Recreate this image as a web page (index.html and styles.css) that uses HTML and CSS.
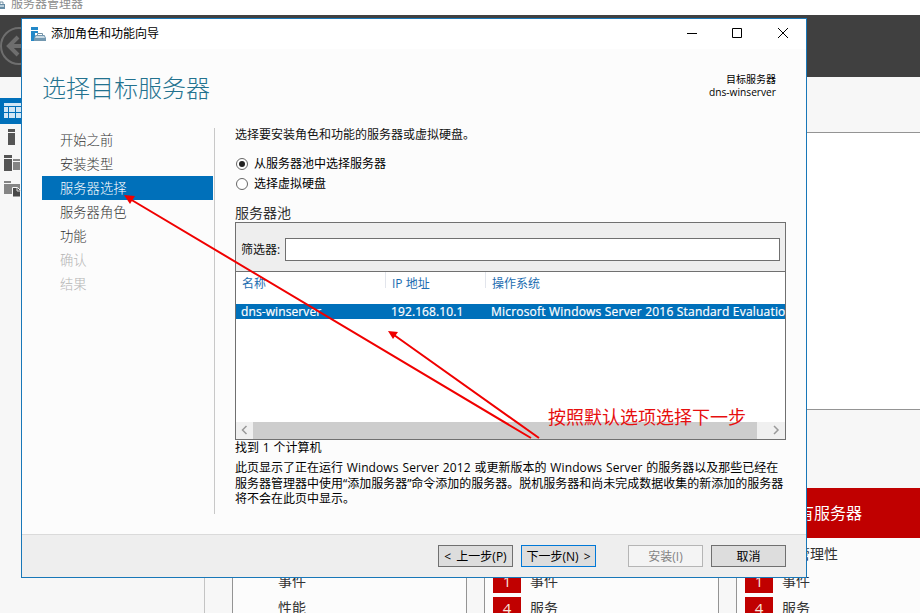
FILE: index.html
```html
<!DOCTYPE html>
<html lang="zh-CN">
<head>
	<meta charset="utf-8">
	<title>添加角色和功能向导</title>
	<link rel="stylesheet" href="styles.css">
</head>
<body>
	<!--服务器管理器-->
	<div class="manager">
		<div class="manager-title">
			<svg width="8" height="12" viewBox="0 0 8 12"><path d="M0 4V2h3v2" fill="none" stroke="#7592a5"/><path d="M0 4h5v5H0z" fill="#668ca5"/><path d="M0 5h4v2H0z" fill="#b9cdd9"/></svg>
			<span>服务器管理器</span>
		</div>
		<div class="manager-bar">
			<svg width="40" height="40" viewBox="0 0 40 40" fill="none" stroke="#6e6e6e"><circle cx="19" cy="20" r="18" stroke-width="2"/><path d="M32 20H9M18 11L9 20l9 9" stroke-width="4"/></svg>
		</div>
		<div class="manager-body">
			<div class="side">
				<p class="side-item active"><svg width="18" height="16" viewBox="0 0 18 16" fill="#d4e7f5"><path d="M0 0h18v3H0zM0 4h4v5H0zM5 4h6v5H5zM12 4h6v5h-6zM0 10h4v5H0zM5 10h6v5H5zM12 10h6v5h-6z"/></svg></p>
				<p class="side-item"><svg width="18" height="16" viewBox="0 0 18 16" fill="#555"><path d="M4 0h7v3H4zM4 4h7v12H4z"/></svg></p>
				<p class="side-item"><svg width="18" height="16" viewBox="0 0 18 16"><path d="M0 0h8v3H0zM0 4h8v12H0z" fill="#555"/><path d="M9 4h7v2H9zM9 7h7v8H9z" fill="#858585"/></svg></p>
				<p class="side-item"><svg width="18" height="16" viewBox="0 0 18 16"><path d="M0 0h7v2H0zM0 3h16v10H0z" fill="#858585"/><path d="M8.500 6.500h5l3 3V16h-8z" fill="#494949" stroke="#f7f7f7"/><path d="M13 7v3h3" fill="none" stroke="#ddd"/></svg></p>
			</div>
			<div class="main">
				<div class="main-top"></div>
				<div class="main-welcome"></div>
				<div class="main-gap"></div>
				<div class="tiles">
					<div class="tile">
						<div class="tile-head"></div>
						<ul>
							<li></li>
							<li><i></i>事件</li>
							<li><i></i>性能</li>
						</ul>
					</div>
					<div class="tile">
						<div class="tile-head"></div>
						<ul>
							<li></li>
							<li><i class="num">1</i>事件</li>
							<li><i class="num">4</i>服务</li>
						</ul>
					</div>
					<div class="tile">
						<div class="tile-head">所有服务器</div>
						<ul>
							<li><i></i>可管理性</li>
							<li><i class="num">1</i>事件</li>
							<li><i class="num">4</i>服务</li>
						</ul>
					</div>
				</div>
			</div>
		</div>
	</div>

	<!--向导窗口-->
	<div class="dialog">
		<div class="dialog-title">
			<svg width="15" height="15" viewBox="0 0 15 15"><path d="M0 0h7v3H0zM0 4h7v2H4v8H0z" fill="#2388c8"/><path d="M6.500 8V6.500h5V8" fill="none" stroke="#7592a5"/><path d="M3 11l1.500-3h9L15 11v3H3z" fill="#7398b0"/><path d="M5 9h8l1 2H4z" fill="#c9d9e3"/></svg>
			<span class="name">添加角色和功能向导</span>
			<svg class="win-btns" width="104" height="12" viewBox="0 0 104 12" fill="none" stroke="#000"><path d="M1 6.500h10M46.500 1.500h9v9h-9zM92 1l10 10M102 1L92 11"/></svg>
		</div>
		<div class="dialog-head">
			<h1>选择目标服务器</h1>
			<div class="target">目标服务器<br><span>dns-winserver</span></div>
		</div>
		<div class="dialog-body">
			<ul class="steps">
				<li>开始之前</li>
				<li>安装类型</li>
				<li class="current">服务器选择</li>
				<li>服务器角色</li>
				<li>功能</li>
				<li class="off">确认</li>
				<li class="off">结果</li>
			</ul>
			<div class="content">
				<p class="intro">选择要安装角色和功能的服务器或虚拟硬盘。</p>
				<p class="radio"><i class="checked"></i>从服务器池中选择服务器</p>
				<p class="radio"><i></i>选择虚拟硬盘</p>
				<p class="pool-label">服务器池</p>
				<div class="pool">
					<div class="filter">
						<span>筛选器:</span>
						<div class="input"></div>
					</div>
					<div class="row row-head">
						<span>名称</span><span>IP 地址</span><span>操作系统</span>
					</div>
					<div class="row row-selected">
						<span>dns-winserver</span><span>192.168.10.1</span><span class="os">Microsoft Windows Server 2016 Standard Evaluatio</span>
					</div>
					<div class="scroll">
						<svg width="17" height="16" viewBox="0 0 17 16" fill="none" stroke="#999" stroke-width="1.500"><path d="M10.500 4l-4 4 4 4"/></svg>
						<div class="thumb"></div>
						<svg width="17" height="16" viewBox="0 0 17 16" fill="none" stroke="#999" stroke-width="1.500"><path d="M6 4l4 4-4 4"/></svg>
					</div>
				</div>
				<p class="found">找到 1 个计算机</p>
				<div class="note">
					<p>此页显示了正在运行 <b>Windows Server 2012</b> 或更新版本的 <b>Windows Server</b> 的服务器以及那些已经在</p>
					<p>服务器管理器中使用“添加服务器”命令添加的服务器。脱机服务器和尚未完成数据收集的新添加的服务器</p>
					<p>将不会在此页中显示。</p>
				</div>
			</div>
		</div>
		<div class="dialog-foot">
			<span class="btn">&lt; 上一步(P)</span>
			<span class="btn btn-default">下一步(N) &gt;</span>
			<span class="btn btn-off">安装(I)</span>
			<span class="btn">取消</span>
		</div>
	</div>

	<!--标注-->
	<svg class="arrows" width="920" height="613" viewBox="0 0 920 613">
		<path d="M531 438L130 199M539 438L394 335" stroke="#f00000" stroke-width="2"/>
		<path d="M124 195l11 1-5 8zM388 331l10 1-5 7z" fill="#f00000"/>
	</svg>
	<p class="remark">按照默认选项选择下一步</p>
</body>
</html>
```
FILE: styles.css
```css
* {
	margin: 0;
	padding: 0;
	box-sizing: border-box;
}

body {
	position: relative;
	width: 920px;
	height: 613px;
	overflow: hidden;
	font: 12px/16px "Open Sans", "Noto Sans CJK SC", sans-serif;
	color: #111;
	white-space: nowrap;
}

ul {
	list-style: none;
}

i,
b {
	font-style: normal;
	font-weight: normal;
}

svg {
	display: block;
	flex: none;
}

/* 服务器管理器 */
.manager {
	display: flex;
	flex-direction: column;
	height: 613px;
	overflow: hidden;
	background: #fff;
}

.manager-title {
	display: flex;
	flex: none;
	height: 15px;
	color: #8c8c8c;
	line-height: 16px;
}

.manager-title span {
	margin: -4px 0 0 3px;
}

.manager-bar {
	flex: none;
	height: 62px;
	padding-top: 11px;
	background: #404040;
}

.manager-body {
	display: flex;
	flex: none;
	height: 536px;
}

.side {
	flex: none;
	width: 205px;
	padding-top: 21px;
	border-right: 1px solid #c4c4c4;
	background: #f7f7f7;
}

.side-item {
	height: 26px;
	padding: 5px 0 0 4px;
}

.side-item.active {
	background: #0070ba;
}

.main {
	flex: none;
	width: 715px;
	overflow: hidden;
	background: #f7f7f7;
}

.main-top {
	height: 55px;
}

.main-welcome {
	height: 278px;
	border-top: 1px solid #949494;
	border-bottom: 1px solid #949494;
	background: #fff;
}

.main-gap {
	height: 78px;
}

.tiles {
	display: flex;
	gap: 17px;
	padding-left: 27px;
}

.tile {
	flex: none;
	width: 235px;
	height: 140px;
	border: 1px solid #949494;
	border-top: 0;
	background: #fcfcfc;
}

.tile-head {
	height: 50px;
	margin: 0 -1px;
	padding-left: 46px;
	background: #c00000;
	color: #fff;
	font-size: 16px;
	line-height: 50px;
}

.tile li {
	display: flex;
	height: 27px;
	padding: 4px 0 0 8px;
	font-size: 14px;
	line-height: 22px;
	color: #333;
}

.tile ul {
	padding-top: 1px;
}

.tile i {
	width: 28px;
	height: 23px;
	margin-right: 9px;
	text-align: center;
}

.tile .num {
	background: #c00000;
	color: #fbe5dc;
	font-size: 15px;
}

/* 向导窗口 */
.dialog {
	position: absolute;
	left: 21px;
	top: 18px;
	display: flex;
	flex-direction: column;
	width: 786px;
	height: 560px;
	border: 1px solid #1877b8;
	background: #fcfcfc;
}

.dialog-title {
	display: flex;
	align-items: center;
	height: 30px;
	padding: 0 16px 0 9px;
	background: #fff;
	color: #000;
}

.dialog-title .name {
	flex: 1;
	margin-left: 5px;
}

.win-btns {
	margin-bottom: 2px;
}

.dialog-head {
	display: flex;
	justify-content: space-between;
	height: 78px;
	padding: 22px 30px 0 20px;
}

.dialog-head h1 {
	color: #23728f;
	font-size: 24px;
	font-weight: 300;
	line-height: 33px;
}

.target {
	padding-top: 2px;
	font-size: 10px;
	line-height: 13px;
	text-align: right;
	color: #000;
}

.target span {
	font-size: 10.200px;
}

.dialog-body {
	display: flex;
	flex: 1;
	padding-left: 20px;
}

.steps {
	width: 173px;
	height: 386px;
	margin-top: 1px;
	padding-right: 1px;
	border-right: 1px solid #c8c8c8;
	color: #333;
	font-size: 13.300px;
	font-weight: 300;
	line-height: 25px;
}

.steps li {
	height: 24px;
	padding-left: 18px;
}

.steps .current {
	background: #0070ba;
	color: #fff;
}

.steps .off {
	color: #b4b4b4;
}

.content {
	width: 551px;
	margin-left: 20px;
}

.intro {
	height: 27px;
}

.radio {
	display: flex;
	align-items: center;
	height: 20px;
	color: #000;
}

.radio i {
	display: flex;
	align-items: center;
	justify-content: center;
	width: 12px;
	height: 12px;
	margin: 0 6px 0 1px;
	border: 1px solid #666;
	border-radius: 50%;
	background: #fff;
}

.radio .checked::before {
	content: "";
	width: 6px;
	height: 6px;
	border-radius: 50%;
	background: #222;
}

.pool-label {
	height: 28px;
	padding-top: 10px;
	font-size: 14px;
	line-height: 18px;
	color: #333;
}

.pool {
	display: flex;
	flex-direction: column;
	height: 218px;
	border: 1px solid #707070;
	background: #fff;
}

.filter {
	display: flex;
	align-items: center;
	height: 49px;
	padding: 5px 5px 0;
	border-bottom: 1px solid #707070;
	background: #eee;
}

.filter .input {
	flex: 1;
	height: 23px;
	margin-left: 5px;
	border: 1px solid #707070;
	background: #fff;
}

.row {
	display: grid;
	grid-template-columns: 150px 100px 1fr;
	overflow: hidden;
}

.row-head {
	height: 32px;
	color: #1c6db0;
}

.row-head span {
	height: 16px;
	padding: 4px 0 0 6px;
	border-right: 1px solid #e2e5ec;
}

.row-head span:last-child {
	border-right: 0;
}

.row-selected {
	height: 15px;
	background: #0070ba;
	color: #fff;
	font-weight: 500;
	line-height: 15px;
	letter-spacing: .1px;
	-webkit-text-stroke: .2px #fff;
}

.row-selected span {
	min-width: 0;
	padding-left: 5px;
}

.row-selected .os {
	letter-spacing: .2px;
}

.scroll {
	display: flex;
	height: 17px;
	margin-top: auto;
	background: #f0f0f0;
}

.scroll .thumb {
	flex: 1;
	margin-right: 11px;
	background: #cdcdcd;
}

.found {
	height: 20px;
	color: #000;
	word-spacing: .7px;
}

.note {
	color: #000;
	line-height: 15.500px;
	word-spacing: .7px;
}

.note b {
	letter-spacing: .1px;
}

.dialog-foot {
	display: flex;
	height: 43px;
	padding: 10px 0 0 416px;
	border-top: 1px solid #dadada;
	background: #eee;
}

.btn {
	width: 75px;
	height: 22px;
	margin-right: 8px;
	border: 1px solid #707070;
	background: #ddd;
	color: #000;
	line-height: 21px;
	text-align: center;
	word-spacing: 2px;
}

.btn-default {
	margin-right: 32px;
	border-color: #0078d7;
}

.btn-off {
	border-color: #b5b5b5;
	background: #f4f4f4;
	color: #838383;
}

/* 标注 */
.arrows {
	position: absolute;
	left: 0;
	top: 0;
}

.remark {
	position: absolute;
	left: 548px;
	top: 404px;
	color: #e60f0f;
	font-size: 18px;
	line-height: 26px;
}
```
